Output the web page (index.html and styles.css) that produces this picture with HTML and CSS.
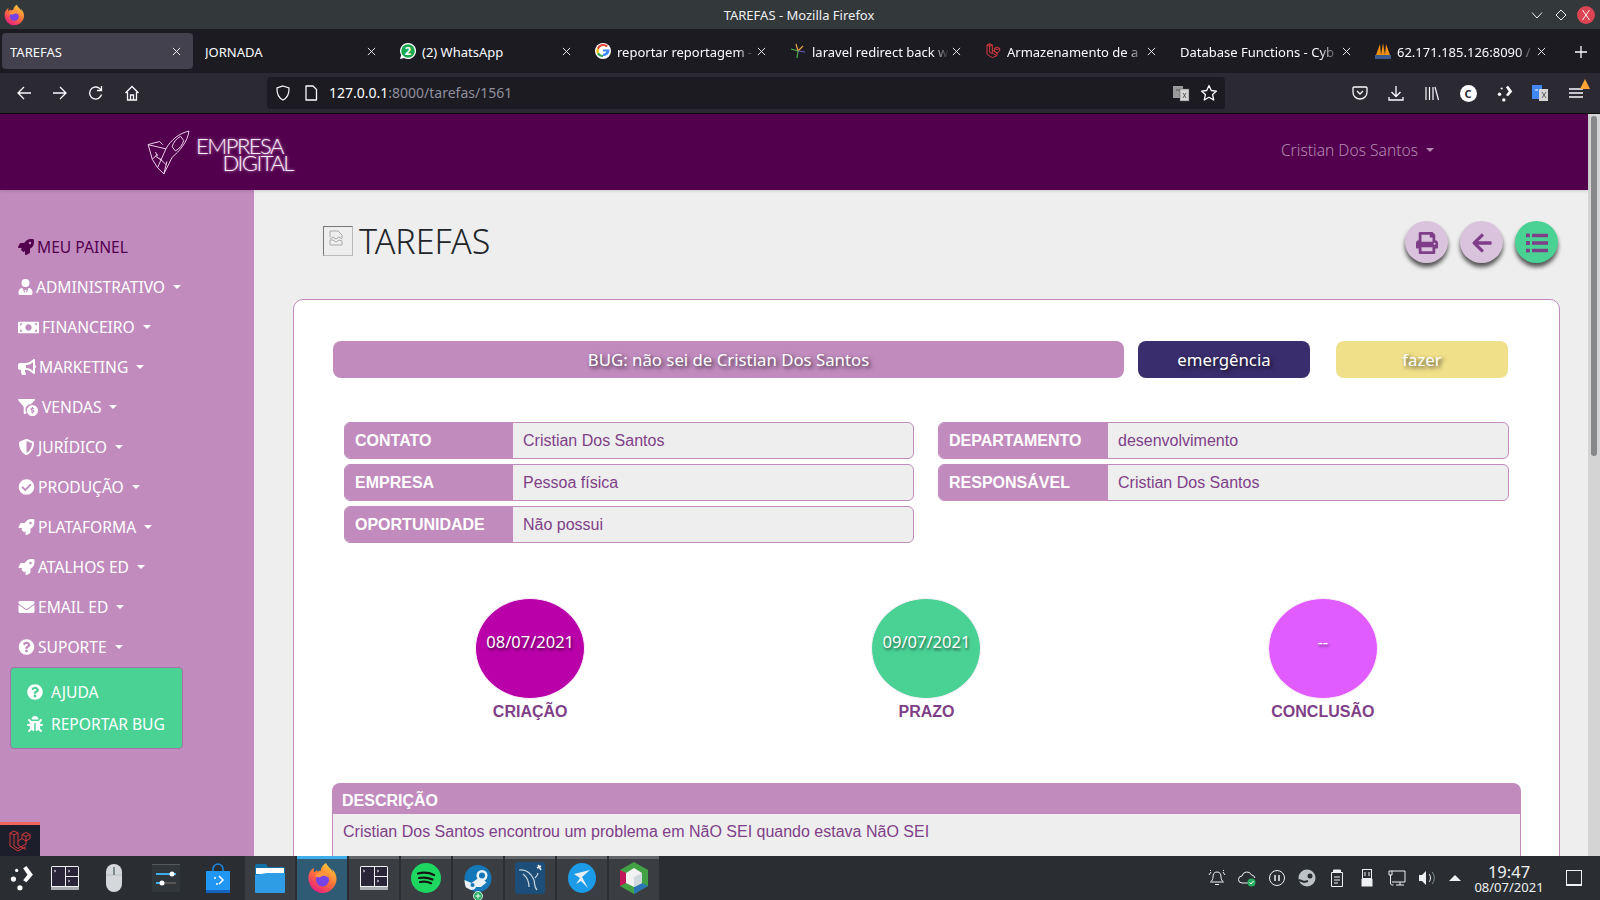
FILE: index.html
```html
<!DOCTYPE html>
<html lang="pt-BR">
<head>
<meta charset="utf-8">
<title>TAREFAS - Mozilla Firefox</title>
<link rel="stylesheet" href="styles.css">
</head>
<body>
<svg class="defs" width="0" height="0" aria-hidden="true">
  <defs>
    <symbol id="i-x" viewBox="0 0 10 10"><path d="M1 1l8 8M9 1l-8 8" stroke="#fbfbfe" stroke-width="1" fill="none"/></symbol>
    <symbol id="i-rocket" viewBox="0 0 512 512"><path d="M505.12 19.09c-1.19-5.53-6.66-11-12.21-12.19C460.72 0 435.51 0 410.41 0 307.18 0 245.27 55.2 199.05 128H94.84c-16.35.02-35.56 11.88-42.89 26.48L2.52 253.3A28.4 28.4 0 0 0 0 264a24 24 0 0 0 24 24h103.81l-22.47 22.47c-11.37 11.36-13 32.26 0 45.25l50.9 50.9c11.16 11.19 32.16 13.16 45.28 0l22.47-22.47V488a24 24 0 0 0 24 24 28.56 28.56 0 0 0 10.71-2.52l98.73-49.39c14.63-7.3 26.51-26.5 26.51-42.86V312.8c72.6-46.31 128.03-108.41 128.03-211.09C512.08 76.5 512.08 51.3 505.12 19.09zM384.04 168a40 40 0 1 1 40.01-40 40.02 40.02 0 0 1-40.01 40z"/></symbol>
    <symbol id="i-user" viewBox="0 0 448 512"><path d="M224 256a128 128 0 1 0 0-256 128 128 0 0 0 0 256zM320 288l-64 170-16-66 24-44h-80l24 44-16 66-64-170C56 292 0 346 0 416v48c0 26 22 48 48 48h352c26 0 48-22 48-48v-48c0-70-56-124-128-128z"/></symbol>
    <symbol id="i-money" viewBox="0 0 640 512"><path fill-rule="evenodd" d="M16 80h608c9 0 16 7 16 16v320c0 9-7 16-16 16H16c-9 0-16-7-16-16V96c0-9 7-16 16-16zM64 368c0 0 0 16 0 16h64c0-35-29-64-64-64zM576 144v-16h-64c0 35 29 64 64 64zM64 128v64c35 0 64-29 64-64zM512 384h64v-64c-35 0-64 29-64 64zM320 160c-53 0-96 43-96 96s43 96 96 96 96-43 96-96-43-96-96-96z"/></symbol>
    <symbol id="i-horn" viewBox="0 0 576 512"><path d="M576 240c0-23.63-12.95-44.04-32-55.12V32.01C544 23.26 537.02 0 512 0c-7.12 0-14.19 2.38-19.98 7.02l-85.03 68.03C364.28 109.19 310.66 128 256 128H64c-35.35 0-64 28.65-64 64v96c0 35.35 28.65 64 64 64h33.7c-1.39 10.48-2.18 21.14-2.18 32 0 39.77 9.26 77.35 25.56 110.94 5.19 10.69 16.52 17.06 28.4 17.06h74.28c26.05 0 41.69-29.84 25.9-50.56-16.4-21.52-26.15-48.36-26.15-77.44 0-11.11 1.62-21.79 4.41-32H256c54.66 0 108.28 18.81 150.98 52.95l85.03 68.03a32.023 32.023 0 0 0 19.98 7.02c24.92 0 32-22.78 32-32V295.13C563.05 284.04 576 263.63 576 240zm-96 141.42l-33.05-26.44C392.95 311.78 325.12 288 256 288v-96c69.12 0 136.95-23.78 190.95-66.98L480 98.58v282.84z"/></symbol>
    <symbol id="i-funnel" viewBox="0 0 640 512"><path fill-rule="evenodd" d="M20 0h480c18 0 27 22 14 35L400 150c-90 10-170 70-170 170 0 40 15 76 42 102l-70 30c-12 9-28 0-28-14V230L6 35C-7 22 2 0 20 0zM440 180a170 170 0 1 1 0 340 170 170 0 0 1 0-340zm-18 64v22c-26 5-40 22-40 44 0 26 22 38 44 44 20 5 28 8 28 16 0 6-6 12-20 12-10 0-22-4-30-10l-16 24c10 8 22 12 34 14v26h40v-24c24-5 40-22 40-46 0-26-22-38-44-44-20-5-28-8-28-14 0-6 6-10 18-10 8 0 18 2 26 8l16-24c-8-6-20-10-32-12v-26z"/></symbol>
    <symbol id="i-shield" viewBox="0 0 512 512"><path d="M466.5 83.7l-192-80a48.15 48.15 0 0 0-36.9 0l-192 80C27.7 91.1 16 108.6 16 128c0 198.5 114.5 335.7 221.5 380.3 11.8 4.9 25.1 4.9 36.9 0C360.1 472.6 496 349.3 496 128c0-19.4-11.7-36.9-29.5-44.3zM256.1 446.3l-.1-381 175.9 73.3c-3.3 151.4-82.1 261.1-175.8 307.7z"/></symbol>
    <symbol id="i-check" viewBox="0 0 512 512"><path d="M504 256c0 136.967-111.033 248-248 248S8 392.967 8 256 119.033 8 256 8s248 111.033 248 248zM227.314 387.314l184-184c6.248-6.248 6.248-16.379 0-22.627l-22.627-22.627c-6.248-6.249-16.379-6.249-22.628 0L216 308.118l-70.059-70.059c-6.248-6.248-16.379-6.248-22.628 0l-22.627 22.627c-6.248 6.248-6.248 16.379 0 22.627l104 104c6.249 6.249 16.379 6.249 22.628.001z"/></symbol>
    <symbol id="i-mail" viewBox="0 0 512 512"><path d="M502.3 190.8c3.9-3.1 9.7-.2 9.7 4.7V400c0 26.5-21.5 48-48 48H48c-26.5 0-48-21.5-48-48V195.6c0-5 5.7-7.8 9.7-4.7 22.4 17.4 52.1 39.5 154.1 113.6 21.1 15.4 56.7 47.8 92.2 47.6 35.7.3 72-32.8 92.3-47.6 102-74.1 131.6-96.3 154-113.7zM256 320c23.2.4 56.6-29.2 73.4-41.4 132.7-96.3 142.8-104.7 173.4-128.7 5.8-4.5 9.2-11.5 9.2-18.9v-19c0-26.5-21.5-48-48-48H48C21.5 64 0 85.5 0 112v19c0 7.4 3.4 14.3 9.2 18.9 30.6 23.9 40.7 32.4 173.4 128.7 16.8 12.2 50.2 41.8 73.4 41.4z"/></symbol>
    <symbol id="i-help" viewBox="0 0 512 512"><path d="M504 256c0 136.997-111.043 248-248 248S8 392.997 8 256C8 119.083 119.043 8 256 8s248 111.083 248 248zM262.655 90c-54.497 0-89.255 22.957-116.549 63.758-3.536 5.286-2.353 12.415 2.715 16.258l34.699 26.31c5.205 3.947 12.621 3.008 16.665-2.122 17.864-22.658 30.113-35.797 57.303-35.797 20.429 0 45.698 13.148 45.698 32.958 0 14.976-12.363 22.667-32.534 33.976C247.128 238.528 216 254.941 216 296v4c0 6.627 5.373 12 12 12h56c6.627 0 12-5.373 12-12v-1.333c0-28.462 83.186-29.647 83.186-106.667 0-58.002-60.165-102-116.531-102zM256 338c-25.365 0-46 20.635-46 46 0 25.364 20.635 46 46 46s46-20.636 46-46c0-25.365-20.635-46-46-46z"/></symbol>
    <symbol id="i-bug" viewBox="0 0 512 512"><path d="M511.988 288.9c-.478 17.43-15.217 31.1-32.653 31.1H424v16c0 21.864-4.882 42.584-13.6 61.145l60.228 60.228c12.496 12.497 12.496 32.758 0 45.255-12.498 12.497-32.759 12.496-45.256 0l-54.736-54.736C345.886 467.965 314.351 480 280 480V236c0-6.627-5.373-12-12-12h-24c-6.627 0-12 5.373-12 12v244c-34.351 0-65.886-12.035-90.636-32.108l-54.736 54.736c-12.498 12.497-32.759 12.496-45.256 0-12.496-12.497-12.496-32.758 0-45.255l60.228-60.228C92.882 378.584 88 357.864 88 336v-16H32.666C15.23 320 .491 306.33.013 288.9-.484 270.816 14.028 256 32 256h56v-58.745l-46.628-46.628c-12.496-12.497-12.496-32.758 0-45.255 12.498-12.497 32.758-12.497 45.256 0L141.255 160h229.489l54.627-54.627c12.498-12.497 32.758-12.497 45.256 0 12.496 12.497 12.496 32.758 0 45.255L424 197.255V256h56c17.972 0 32.484 14.816 31.988 32.9zM257 0c-61.856 0-112 50.144-112 112h224C369 50.144 318.856 0 257 0z"/></symbol>
    <symbol id="i-print" viewBox="0 0 512 512"><path d="M448 192V77.25c0-8.49-3.37-16.62-9.37-22.63L393.37 9.37c-6-6-14.14-9.37-22.63-9.37H96C78.33 0 64 14.33 64 32v160c-35.35 0-64 28.65-64 64v112c0 8.84 7.16 16 16 16h48v96c0 17.67 14.33 32 32 32h320c17.67 0 32-14.33 32-32v-96h48c8.84 0 16-7.16 16-16V256c0-35.35-28.65-64-64-64zm-64 256H128v-96h256v96zm0-224H128V64h192v48c0 8.84 7.16 16 16 16h48v96zm48 72c-13.25 0-24-10.75-24-24 0-13.26 10.75-24 24-24s24 10.74 24 24c0 13.25-10.75 24-24 24z"/></symbol>
    <symbol id="i-back" viewBox="0 0 448 512"><path d="M257.5 445.1l-22.2 22.2c-9.4 9.4-24.6 9.4-33.9 0L7 273c-9.4-9.4-9.4-24.6 0-33.9L201.4 44.7c9.4-9.4 24.6-9.4 33.9 0l22.2 22.2c9.5 9.5 9.3 25-.4 34.3L136.6 216H424c13.3 0 24 10.7 24 24v32c0 13.3-10.7 24-24 24H136.6l120.5 114.8c9.8 9.3 10 24.8.4 34.3z"/></symbol>
    <symbol id="i-list" viewBox="0 0 512 512"><path d="M0 35h90v90H0zM0 211h90v90H0zM0 387h90v90H0zM140 40h372v80H140zM140 216h372v80H140zM140 392h372v80H140z"/></symbol>
    <symbol id="i-laravel" viewBox="0 0 24 24"><path fill="none" stroke="currentColor" stroke-width="1" stroke-linejoin="round" d="M2 4l4-2 4 2v12l8 4.500M2 4v13l8 5 8-4.500M2 4l4 2 4-2M6 6v11l4 2.500 8-4.500M10 12l4-2.500M14 9.500V5.500l4-2 4 2v4l-4 2.500-4-2.500zM14 5.500l4 2 4-2M18 7.500v8"/></symbol>
    <symbol id="i-kde" viewBox="0 0 24 24"><circle cx="5" cy="13" r="2.400"/><circle cx="8" cy="5" r="1.500"/><circle cx="11" cy="21" r="2.400"/><path d="M14 3l3-2 6 8-6 7-3-2 4-5z"/></symbol>
    <symbol id="i-konsole" viewBox="0 0 28 24"><rect x="0" y="0" width="28" height="24" rx="1.500" fill="#eff0f1"/><rect x="1" y="1" width="13" height="19" fill="#2a2438"/><rect x="15" y="1" width="12" height="9" fill="#2a2438"/><rect x="15" y="11" width="12" height="9" fill="#2a2438"/><rect x="0" y="21" width="28" height="3" fill="#a9adb0"/><path d="M3 4l2 1-2 1M17 4l2 1-2 1M17 14l2 1-2 1" stroke="#eff0f1" stroke-width=".7" fill="none"/></symbol>
    <symbol id="i-firefox" viewBox="0 0 32 32"><defs><linearGradient id="ff1" x1="0.800" y1="0" x2="0.200" y2="1"><stop offset="0" stop-color="#ffd43a"/><stop offset=".5" stop-color="#ff7139"/><stop offset="1" stop-color="#e31587"/></linearGradient></defs><path fill="url(#ff1)" d="M29 11c-.7-1.700-2.100-3.500-3.300-4.100 1 1.900 1.500 3.400 1.700 4.500C25.700 7 22 5.200 20 1c-4 2.400-5.200 6-5 7.500-1 0-2.200.4-3 1.100-.5-.4-.8-.9-1-1.600-1.300.6-2.100 1.600-2.900 2.600-.5-1-.6-3 0-4.800C5.500 7.300 3 10 2.500 14 1.500 23 8 31 16.500 31 24 31 30 25 30.500 17.500c.100-2.300-.5-4.500-1.500-6.500z"/><circle cx="16.500" cy="18" r="6.500" fill="#7542e5"/><path fill="#ff9640" d="M9 14c2-3 5-4 8-3.500 3 .6 5 3 5.500 5.500-2-2-4-2.500-6-2-1 .3-1.500 1-2.500 1.200-2 .3-3-.5-5-1.200z"/></symbol>
    <symbol id="i-laraveltab" viewBox="0 0 24 24"><path fill="none" stroke="#d1383d" stroke-width="1.500" stroke-linejoin="round" d="M3 3l4-2 4 2v12l7 4v-4l-7-4M3 3v14l8 5 7-3M7 1v13l4 2M3 3l4 2 4-2M14 8l4-2 4 2v4l-4 3-4-3zM14 8l4 2 4-2"/></symbol>
  </defs>
</svg>

<div class="window">
  <header class="titlebar">
    <svg class="tb-logo" width="22" height="22"><use href="#i-firefox"/></svg>
    <span class="tb-title">TAREFAS - Mozilla Firefox</span>
    <div class="tb-controls">
      <svg width="12" height="12" viewBox="0 0 12 12"><path d="M1 3.500l5 5.500 5-5.500" fill="none" stroke="#eff0f1"/></svg>
      <svg width="12" height="12" viewBox="0 0 12 12"><path d="M6 1l5 5-5 5-5-5z" fill="none" stroke="#eff0f1"/></svg>
      <span class="tb-close"><svg width="12" height="12" viewBox="0 0 12 12"><path d="M2.500 1l7 10M9.500 1l-7 10" stroke="#fff" stroke-width=".9"/></svg></span>
    </div>
  </header>

  <nav class="tabs">
    <div class="tab tab-active"><span class="tab-text">TAREFAS</span><svg class="tab-x"><use href="#i-x"/></svg></div>
    <div class="tab"><span class="tab-text">JORNADA</span><svg class="tab-x"><use href="#i-x"/></svg></div>
    <div class="tab">
      <svg class="fav" viewBox="0 0 16 16"><path d="M8 0a8 8 0 0 0-6.800 12.100L0 16l4-1.100A8 8 0 1 0 8 0z" fill="#fff"/><circle cx="8" cy="8" r="6.800" fill="#1aa84f"/><text x="8" y="12" text-anchor="middle" font-size="11" font-weight="700" fill="#fff" font-family="Noto Sans, sans-serif">2</text></svg>
      <span class="tab-text">(2) WhatsApp</span><svg class="tab-x"><use href="#i-x"/></svg>
    </div>
    <div class="tab">
      <svg class="fav" viewBox="0 0 16 16"><circle cx="8" cy="8" r="8" fill="#fff"/><path d="M8 6.500h6.500c.3 3.800-2.200 6.500-6.500 6.500V10.800c1.700 0 3-1 3.400-2.200H8z" fill="#4285f4"/><path d="M8 3c1.300 0 2.400.5 3.300 1.300L13 2.700A7 7 0 0 0 2 5l2 1.500C4.700 4.500 6.100 3 8 3z" fill="#ea4335"/><path d="M2 5a7 7 0 0 0 0 6l2-1.500a4 4 0 0 1 0-3z" fill="#fbbc05"/><path d="M2 11a7 7 0 0 0 6 3v-2c-1.900 0-3.300-1-4-2.500z" fill="#34a853"/></svg>
      <span class="tab-text tab-fade">reportar reportagem -</span><svg class="tab-x"><use href="#i-x"/></svg>
    </div>
    <div class="tab">
      <svg class="fav" viewBox="0 0 16 16"><path d="M8 8L6 1M8 8l5-5" stroke="#e8a33d" stroke-width="1.200"/><path d="M8 8L1 6M8 8l-1 7" stroke="#4caf50" stroke-width="1.200"/><path d="M8 8l7 1" stroke="#6c5fc7" stroke-width="1.200"/></svg>
      <span class="tab-text tab-fade">laravel redirect back w</span><svg class="tab-x"><use href="#i-x"/></svg>
    </div>
    <div class="tab">
      <svg class="fav"><use href="#i-laraveltab"/></svg>
      <span class="tab-text tab-fade">Armazenamento de a</span><svg class="tab-x"><use href="#i-x"/></svg>
    </div>
    <div class="tab"><span class="tab-text tab-fade">Database Functions - Cyb</span><svg class="tab-x"><use href="#i-x"/></svg></div>
    <div class="tab">
      <svg class="fav" viewBox="0 0 16 16"><path d="M1 12L5 1l1 11zM6 12L8 0l2 12zM10 12l1-11 4 11z" fill="#f29111"/><rect x="0" y="12" width="16" height="4" fill="#3b5b8c"/></svg>
      <span class="tab-text tab-fade">62.171.185.126:8090 /</span><svg class="tab-x"><use href="#i-x"/></svg>
    </div>
    <svg class="tab-plus" width="14" height="14" viewBox="0 0 14 14"><path d="M7 1v12M1 7h12" stroke="#fbfbfe" stroke-width="1.300"/></svg>
  </nav>

  <div class="toolbar">
    <div class="tool-group tool-left">
      <span class="tool"><svg width="16" height="16" viewBox="0 0 16 16"><path d="M15 8H2M8 2L2 8l6 6" fill="none" stroke="#fbfbfe" stroke-width="1.300"/></svg></span>
      <span class="tool"><svg width="16" height="16" viewBox="0 0 16 16"><path d="M1 8h13M8 2l6 6-6 6" fill="none" stroke="#fbfbfe" stroke-width="1.300"/></svg></span>
      <span class="tool"><svg width="16" height="16" viewBox="0 0 16 16"><path d="M13.500 9.500A6 6 0 1 1 11 3l2.500 2M13.500 1v4.500H9" fill="none" stroke="#fbfbfe" stroke-width="1.300"/></svg></span>
      <span class="tool"><svg width="16" height="16" viewBox="0 0 16 16"><path d="M1.500 8L8 1.500 14.500 8M3.500 7v8h9V7M6.500 15v-5h3v5" fill="none" stroke="#fbfbfe" stroke-width="1.300"/></svg></span>
    </div>
    <div class="urlbar">
      <svg class="url-shield" width="16" height="16" viewBox="0 0 16 16"><path d="M8 1l6 2c.3 6-2 10-6 12C4 13 1.700 9 2 3z" fill="none" stroke="#fbfbfe" stroke-width="1.200"/></svg>
      <svg class="url-page" width="14" height="16" viewBox="0 0 14 16"><path d="M2 1h7l3.500 3.500V15H2z" fill="none" stroke="#fbfbfe" stroke-width="1.300" stroke-linejoin="round"/></svg>
      <span class="url-text">127.0.0.1<span class="url-dim">:8000/tarefas/1561</span></span>
      <svg class="url-trans" width="18" height="18" viewBox="0 0 18 18"><rect x="1" y="2" width="10" height="12" fill="#9a9a9a"/><rect x="8" y="5" width="9" height="12" fill="#d5d5d5" stroke="#555" stroke-width=".5"/><path d="M4 6h4M11 9l3 5M14 9l-3 5" stroke="#444" stroke-width=".8"/></svg>
      <svg class="url-star" width="18" height="18" viewBox="0 0 18 18"><path d="M9 1.500l2.300 5 5.200.6-3.900 3.500 1.100 5.400L9 13.300 4.300 16l1.100-5.400L1.500 7.100l5.200-.6z" fill="none" stroke="#fbfbfe" stroke-width="1.300" stroke-linejoin="round"/></svg>
    </div>
    <div class="tool-group tool-right">
      <span class="tool"><svg width="16" height="16" viewBox="0 0 16 16"><path d="M2 2h12c.8 0 1 .5 1 1v4c0 4-3 7-7 7s-7-3-7-7V3c0-.5.2-1 1-1z" fill="none" stroke="#fbfbfe" stroke-width="1.300"/><path d="M5 6l3 3 3-3" fill="none" stroke="#fbfbfe" stroke-width="1.300"/></svg></span>
      <span class="tool"><svg width="16" height="16" viewBox="0 0 16 16"><path d="M8 1v10M3.500 7L8 11.500 12.500 7M1 12v3h14v-3" fill="none" stroke="#fbfbfe" stroke-width="1.300"/></svg></span>
      <span class="tool"><svg width="16" height="16" viewBox="0 0 16 16"><path d="M2 2v13M5.500 2v13M9 2v13M11 2l3.500 13" fill="none" stroke="#fbfbfe" stroke-width="1.200"/></svg></span>
      <span class="tool"><span class="tool-c">C</span></span>
      <span class="tool"><svg class="tool-kde" width="17" height="17"><use href="#i-kde"/></svg></span>
      <span class="tool"><svg width="18" height="18" viewBox="0 0 18 18"><rect x="1" y="1" width="10" height="14" fill="#4285f4"/><rect x="8" y="5" width="9" height="12" fill="#d5d5d5"/><path d="M11 8l4 6M15 8l-4 6" stroke="#444" stroke-width=".8"/><path d="M4 6h3" stroke="#fff"/></svg></span>
      <span class="tool tool-menu"><svg width="16" height="16" viewBox="0 0 16 16"><path d="M1 4h14M1 8h14M1 12h14" stroke="#fbfbfe" stroke-width="1.300"/></svg><svg class="tool-warn" width="10" height="10" viewBox="0 0 10 10"><path d="M5 0l5 10H0z" fill="#ffa436"/></svg></span>
    </div>
  </div>

  <div class="page">
    <div class="page-col">
      <header class="site-head">
        <div class="brand">
          <svg class="brand-rocket" width="46" height="46" viewBox="0 0 44 44" fill="none" stroke="#f3dcf3" stroke-width=".9" stroke-linejoin="round">
            <path d="M42 2c-9 2-17 8-22 17L12 37l6 6 8-16C33 21 41 12 42 2z"/>
            <path d="M34 7c-4 2-7 6-8 10l3 4c4-2 7-6 8-10z"/>
            <path d="M20 19L3 15l3-1 8-2 3 3M3 15l4 14 5 8M12 24l-5 5M21 31l-3 12M14 28l6 6M10 22l2 4M16 30l-6-4"/>
          </svg>
          <div class="brand-name"><span class="brand-1">EMPRESA</span><span class="brand-2">DIGITAL</span></div>
        </div>
        <div class="user-menu">Cristian Dos Santos<span class="caret"></span></div>
      </header>

      <div class="body-row">
        <aside class="sidebar">
          <a class="side-item side-current"><svg class="si w16"><use href="#i-rocket"/></svg>MEU PAINEL</a>
          <a class="side-item"><svg class="si w15"><use href="#i-user"/></svg>ADMINISTRATIVO<span class="caret"></span></a>
          <a class="side-item"><svg class="si w20"><use href="#i-money"/></svg>FINANCEIRO<span class="caret"></span></a>
          <a class="side-item"><svg class="si w18"><use href="#i-horn"/></svg>MARKETING<span class="caret"></span></a>
          <a class="side-item"><svg class="si w20"><use href="#i-funnel"/></svg>VENDAS<span class="caret"></span></a>
          <a class="side-item"><svg class="si w16"><use href="#i-shield"/></svg>JURÍDICO<span class="caret"></span></a>
          <a class="side-item"><svg class="si w16"><use href="#i-check"/></svg>PRODUÇÃO<span class="caret"></span></a>
          <a class="side-item"><svg class="si w16"><use href="#i-rocket"/></svg>PLATAFORMA<span class="caret"></span></a>
          <a class="side-item"><svg class="si w16"><use href="#i-rocket"/></svg>ATALHOS ED<span class="caret"></span></a>
          <a class="side-item"><svg class="si w16"><use href="#i-mail"/></svg>EMAIL ED<span class="caret"></span></a>
          <a class="side-item"><svg class="si w16"><use href="#i-help"/></svg>SUPORTE<span class="caret"></span></a>
          <div class="side-drop">
            <a class="drop-item"><svg class="di"><use href="#i-help"/></svg>AJUDA</a>
            <a class="drop-item"><svg class="di"><use href="#i-bug"/></svg>REPORTAR BUG</a>
          </div>
        </aside>

        <main class="main">
          <div class="page-head">
            <span class="broken-img"><svg width="14" height="16" viewBox="0 0 14 16"><path d="M1 7V1h8l4 4v3M1 10v5h12v-4l-3-1-3 2-3-2z" fill="none" stroke="#aaa"/><path d="M1 9l3-2 3 2 3-2 3 2" fill="none" stroke="#aaa"/></svg></span>
            <h1 class="page-title">TAREFAS</h1>
            <div class="fabs">
              <button class="fab"><svg class="fab-i"><use href="#i-print"/></svg></button>
              <button class="fab"><svg class="fab-i"><use href="#i-back"/></svg></button>
              <button class="fab fab-green"><svg class="fab-i"><use href="#i-list"/></svg></button>
            </div>
          </div>

          <section class="card">
            <div class="chips">
              <div class="chip chip-title">BUG: não sei de Cristian Dos Santos</div>
              <div class="chip chip-navy">emergência</div>
              <div class="chip chip-yellow">fazer</div>
            </div>

            <div class="fields">
              <div class="field-col">
                <div class="field"><span class="f-label">CONTATO</span><span class="f-value">Cristian Dos Santos</span></div>
                <div class="field"><span class="f-label">EMPRESA</span><span class="f-value">Pessoa física</span></div>
                <div class="field"><span class="f-label">OPORTUNIDADE</span><span class="f-value">Não possui</span></div>
              </div>
              <div class="field-col field-col-right">
                <div class="field"><span class="f-label">DEPARTAMENTO</span><span class="f-value">desenvolvimento</span></div>
                <div class="field"><span class="f-label">RESPONSÁVEL</span><span class="f-value">Cristian Dos Santos</span></div>
              </div>
            </div>

            <div class="dates">
              <div class="date"><div class="disc disc-magenta">08/07/2021</div><div class="date-label">CRIAÇÃO</div></div>
              <div class="date"><div class="disc disc-green">09/07/2021</div><div class="date-label">PRAZO</div></div>
              <div class="date"><div class="disc disc-pink">--</div><div class="date-label">CONCLUSÃO</div></div>
            </div>

            <div class="desc">
              <div class="desc-head">DESCRIÇÃO</div>
              <div class="desc-body">Cristian Dos Santos encontrou um problema em NãO SEI quando estava NãO SEI</div>
            </div>
          </section>
        </main>

        <div class="debugbar"><svg width="24" height="24"><use href="#i-laravel"/></svg></div>
      </div>
    </div>
    <div class="scrollbar"><div class="scroll-thumb"></div></div>
  </div>

  <footer class="taskbar">
    <span class="task task-launcher"><svg width="26" height="26" class="white"><use href="#i-kde"/></svg></span>
    <span class="task task-term"><svg width="28" height="24"><use href="#i-konsole"/></svg></span>
    <span class="task"><svg width="16" height="28" viewBox="0 0 16 28"><rect x="0" y="0" width="16" height="28" rx="8" fill="#d5d8da"/><path d="M0 11h16" stroke="#aab0b3" stroke-width=".6"/><rect x="7" y="3" width="2" height="8" fill="#7f8c8d"/></svg></span>
    <span class="task"><svg width="28" height="28" viewBox="0 0 28 28"><rect width="28" height="28" fill="#31363b"/><rect y="0" width="28" height="1" fill="#55595c"/><rect x="4" y="9" width="20" height="2" fill="#3daee9"/><circle cx="20" cy="10" r="2.500" fill="#fff"/><rect x="4" y="18" width="20" height="2" fill="#555"/><rect x="4" y="18" width="8" height="2" fill="#3daee9"/><circle cx="10" cy="19" r="2.500" fill="#fff"/></svg></span>
    <span class="task"><svg width="26" height="30" viewBox="0 0 26 30"><path d="M8 9V6a5 5 0 0 1 10 0v3" fill="none" stroke="#1e88e5" stroke-width="1.500"/><path d="M1 8h24v22H1z" fill="#2196f3"/><path d="M1 27h24v3H1z" fill="#1565c0"/><circle cx="10" cy="15" r="1" fill="#fff"/><circle cx="12" cy="21" r="1" fill="#fff"/><path d="M14 13l4 4-4 4" fill="none" stroke="#fff" stroke-width="1.500"/></svg></span>
    <span class="task task-open"><svg width="30" height="30" viewBox="0 0 30 30"><path d="M0 3a2 2 0 0 1 2-2h9l2 3h15a2 2 0 0 1 2 2v22H0z" fill="#1272a8"/><rect x="1" y="5" width="28" height="6" fill="#fff"/><path d="M0 12l12-2h18v19a1 1 0 0 1-1 1H1a1 1 0 0 1-1-1z" fill="#2e9de6"/></svg></span>
    <span class="task task-run task-active"><svg width="32" height="32"><use href="#i-firefox"/></svg></span>
    <span class="task task-run"><svg width="28" height="24"><use href="#i-konsole"/></svg></span>
    <span class="task task-run"><svg width="30" height="30" viewBox="0 0 30 30"><circle cx="15" cy="15" r="15" fill="#1ed760"/><path d="M7 10.500c6-1.500 11-1 16 1.500M8 15c5-1 9-.6 13.500 1.500M9 19c4-.8 7.500-.5 11 1.200" fill="none" stroke="#191414" stroke-width="2.200" stroke-linecap="round"/></svg></span>
    <span class="task task-run task-steam"><svg width="28" height="36" viewBox="0 0 28 36"><ellipse cx="14" cy="13.500" rx="13.500" ry="13.500" fill="#1478b8"/><path d="M.5 15l7 3 9-6.500 6 6-5.500 4.500-5 0c-1 3-5 4-7 2l-3-1.500C1 20 .6 17.500.5 15z" fill="#eaf2f8"/><circle cx="18" cy="10.500" r="5.500" fill="#eaf2f8"/><circle cx="18" cy="10.500" r="3" fill="#1478b8"/><circle cx="8.500" cy="20" r="2" fill="#1478b8"/><circle cx="14" cy="31" r="4.500" fill="#27ae60" stroke="#fff" stroke-width=".8"/><path d="M14 28.500v5M11.500 31h5" stroke="#fff"/></svg></span>
    <span class="task task-run"><svg width="30" height="32" viewBox="0 0 30 32"><rect width="30" height="32" rx="3" fill="#1d4e79"/><path d="M4 8c7-1 12 3 15 10 1 4 0 7 3 10M8 12c4 3 6 8 6 13M20 16c2-2 3-3 3-5" fill="none" stroke="#c9d6df" stroke-width="1.200"/><path d="M23 3l3 5M22 6l4-2" stroke="#e6eef3" stroke-width="1.600"/></svg></span>
    <span class="task task-run"><svg width="28" height="30" viewBox="0 0 28 30"><ellipse cx="14" cy="15" rx="14" ry="15" fill="#1c9ce8"/><path d="M6 11l16-4-8 7 6 11-7-7-5 3 4-6z" fill="#e6eef3"/></svg></span>
    <span class="task task-run"><svg width="28" height="32" viewBox="0 0 28 32"><path d="M14 0l14 8v16l-14 8L0 24V8z" fill="#41a144"/><path d="M0 8v16l6-3V11z" fill="#c2185b"/><path d="M14 32l14-8-6-3-8 4z" fill="#2a74b8"/><path d="M6 11l8-5 8 5v10l-8 4-8-4z" fill="#f2f2f2"/><path d="M14 15l8-4v10l-8 4z" fill="#cfd8dc"/></svg></span>

    <div class="tray">
      <span class="tray-i"><svg width="18" height="18" viewBox="0 0 18 18" fill="none" stroke="#eff0f1"><path d="M9 3c-3 0-4 2-4 5 0 2-1 4-2.500 5h13C14 12 13 10 13 8c0-3-1-5-4-5zM7 15.500h4M1 6l2-3M17 6l-2-3M3 1L2 2M15 1l1 1"/></svg></span>
      <span class="tray-i"><svg width="20" height="18" viewBox="0 0 20 18"><path d="M5 14a3.500 3.500 0 0 1 0-7 5 5 0 0 1 9.500-1A4 4 0 0 1 18 9" fill="none" stroke="#eff0f1"/><path d="M5 14h7" stroke="#eff0f1"/><circle cx="14.500" cy="13.500" r="4" fill="#27ae60"/><path d="M12.500 13.500l1.500 1.500 2.500-3" fill="none" stroke="#fff"/></svg></span>
      <span class="tray-i"><svg width="18" height="18" viewBox="0 0 18 18" fill="none" stroke="#eff0f1"><circle cx="9" cy="9" r="7.500"/><path d="M7 6v6M11 6v6" stroke-width="1.500"/></svg></span>
      <span class="tray-i"><svg width="18" height="18" viewBox="0 0 18 18"><circle cx="9" cy="9" r="8.500" fill="#bdc3c7"/><circle cx="12" cy="7" r="2.500" fill="#2a2e32"/><path d="M1 11l5 2 4-1" stroke="#2a2e32" stroke-width="2" fill="none"/></svg></span>
      <span class="tray-i"><svg width="16" height="18" viewBox="0 0 16 18" fill="none" stroke="#eff0f1"><path d="M2.500 3.500h11v14h-11z"/><path d="M4.500 3.500V1h7v2.500" fill="#eff0f1"/><path d="M5 8h6M5 11h6M5 14h4"/></svg></span>
      <span class="tray-i"><svg width="12" height="18" viewBox="0 0 12 18"><rect x="1.500" y=".5" width="9" height="9" fill="none" stroke="#eff0f1"/><rect x=".5" y="10" width="11" height="7.500" fill="#eff0f1"/><path d="M4 3v4M8 3v4" stroke="#eff0f1"/></svg></span>
      <span class="tray-i"><svg width="18" height="18" viewBox="0 0 18 18" fill="none" stroke="#eff0f1"><path d="M4 2h13v11H4M8 16h8M12 13v3M1 2h3v4H1zM2.500 6v8c0 2 1 2 3 2"/></svg></span>
      <span class="tray-i"><svg width="18" height="18" viewBox="0 0 18 18"><path d="M1 6h3l4-4v14l-4-4H1z" fill="#eff0f1"/><path d="M11 5c2 2 2 6 0 8" fill="none" stroke="#eff0f1"/><path d="M14 3c3 3 3 9 0 12" fill="none" stroke="#7f8c8d"/></svg></span>
      <span class="tray-arrow"></span>
      <div class="clock"><span class="clock-time">19:47</span><span class="clock-date">08/07/2021</span></div>
      <span class="tray-desk"><span class="desk-box"></span></span>
    </div>
  </footer>
</div>
</body>
</html>
```

FILE: styles.css
```css
* { box-sizing: border-box; }
html, body { margin: 0; padding: 0; height: 100%; overflow: hidden; }
body { font-family: "Noto Sans", sans-serif; background: #2a2e32; }
.defs { position: absolute; }
.window { width: 1600px; height: 900px; display: flex; flex-direction: column; }

.titlebar { height: 29px; background: #33383b; display: grid; grid-template-columns: 1fr auto 1fr; align-items: center; padding: 0 5px 0 3px; color: #eff0f1; font-size: 13px; flex: none; }
.tb-logo { justify-self: start; }
.tb-controls { display: flex; align-items: center; gap: 12px; justify-self: end; }
.tb-close { width: 18px; height: 18px; background: #da4453; border-radius: 50%; display: flex; align-items: center; justify-content: center; margin-left: -2px; }

.tabs { height: 44px; background: #1c1b22; display: flex; align-items: flex-start; gap: 4px; padding: 4px 0 0 2px; flex: none; color: #fbfbfe; font-size: 13px; }
.tab { width: 191px; height: 36px; border-radius: 4px; display: flex; align-items: center; padding: 0 8px; flex: none; }
.tab-active { background: #42414d; }
.fav { width: 16px; height: 16px; margin-right: 6px; flex: none; }
.tab-text { flex: 1; white-space: nowrap; overflow: hidden; padding-top: 2px; }
.tab-fade { -webkit-mask-image: linear-gradient(to right, #000 88%, transparent 100%); mask-image: linear-gradient(to right, #000 88%, transparent 100%); }
.tab-x { width: 9px; height: 9px; margin: 0 4px 0 3px; flex: none; }
.tab-plus { margin: 12px 0 0 12px; flex: none; }

.toolbar { height: 41px; background: #2b2a33; border-bottom: 1px solid #0c0c0d; display: flex; align-items: flex-start; padding: 4px 0 0 6px; flex: none; }
.tool-group { display: flex; height: 32px; }
.tool { width: 36px; height: 32px; display: flex; align-items: center; justify-content: center; position: relative; }
.tool-left { width: 144px; }
.urlbar { width: 958px; height: 32px; margin-left: 117px; background: #1c1b22; border-radius: 4px; display: flex; align-items: center; padding: 0 7px 0 8px; color: #fbfbfe; font-size: 14px; }
.url-shield { flex: none; }
.url-page { margin-left: 13px; flex: none; }
.url-text { margin-left: 11px; flex: 1; padding-bottom: 1px; }
.url-dim { color: #8f8f9d; }
.url-star { margin-left: 10px; flex: none; }
.url-trans { flex: none; }
.tool-right { margin-left: 117px; }
.tool-c { width: 17px; height: 17px; border-radius: 50%; background: #fbfbfe; color: #2b2a33; font-size: 11px; font-weight: 700; display: flex; align-items: center; justify-content: center; }
.tool-kde { fill: #fbfbfe; }
.tool-warn { position: absolute; top: 2px; right: 4px; }

.page { flex: 1; display: flex; min-height: 0; }
.page-col { flex: 1; display: flex; flex-direction: column; min-width: 0; }
.scrollbar { width: 12px; background: #d4d4d4; padding: 2px 3px 0; flex: none; }
.scroll-thumb { height: 340px; background: #868889; border-radius: 3px; }

.site-head { height: 76px; background: #52004d; display: flex; align-items: center; padding: 0 154px 0 145px; flex: none; box-shadow: 0 1px 3px rgba(0,0,0,.15); position: relative; z-index: 1; }
.brand { display: flex; align-items: center; gap: 5px; }
.brand-name { display: flex; flex-direction: column; align-items: flex-end; width: 100px; color: #fbeefb; font-family: "Lato", sans-serif; font-weight: 300; text-shadow: 0 0 3px #e6b8e6; line-height: 17px; font-size: 22px; padding-top: 3px; }
.brand-1 { align-self: flex-start; letter-spacing: -1.500px; }
.brand-2 { letter-spacing: -1.500px; margin-right: 3px; }
.user-menu { margin-left: auto; font-size: 15.600px; color: #b48ab2; display: flex; align-items: center; font-weight: 300; padding-bottom: 4px; }
.caret { display: inline-block; width: 0; height: 0; border-top: 4px solid currentColor; border-left: 4px solid transparent; border-right: 4px solid transparent; margin-left: 8px; }

.body-row { flex: 1; display: flex; min-height: 0; position: relative; }
.sidebar { width: 254px; background: #c18bbe; padding: 37px 0 0 0; flex: none; color: #fff; font-size: 15.600px; }
.side-item { height: 40px; display: flex; align-items: center; padding-left: 18px; }
.side-current { color: #52004d; }
.si { fill: currentColor; margin-right: 3px; flex: none; height: 16px; }
.w15 { width: 15px; }
.w16 { width: 17px; }
.w18 { width: 18px; }
.w20 { width: 21px; height: 17px; }
.side-current .w16 { width: 16px; }
.side-drop { margin-left: 10px; width: 173px; height: 82px; background: #4ad295; border: 1px solid #a86fa8; border-radius: 4px; padding-top: 8px; }
.drop-item { height: 32px; display: flex; align-items: center; padding-left: 16px; color: #fff; }
.di { width: 16px; height: 16px; fill: #fff; margin-right: 8px; flex: none; }

.main { flex: 1; background: #eee; min-width: 0; overflow: hidden; }
.page-head { height: 109px; display: flex; align-items: flex-start; padding: 31px 30px 0 69px; }
.broken-img { width: 30px; height: 30px; margin-top: 5px; border: 1px solid; border-color: #777 #bbb #bbb #777; display: flex; align-items: center; justify-content: center; padding: 0 4px 6px 0; flex: none; }
.page-title { margin: 0 0 0 6px; font-size: 34px; font-weight: 300; color: #212529; line-height: 40px; }
.fabs { margin-left: auto; display: flex; gap: 12px; }
.fab { width: 43px; height: 42px; border: 0; border-radius: 50%; background: #dac3dc; box-shadow: 0 4px 4px rgba(0,0,0,.65); display: flex; align-items: center; justify-content: center; padding: 1px 0 0; color: #7f3f88; }
.fab-green { background: #4ad295; }
.fab-i { width: 22px; height: 22px; fill: currentColor; }

.card { margin: 0 28px 0 39px; height: 700px; background: #fff; border: 1px solid #c18bbe; border-radius: 10px 10px 0 0; padding: 41px 38px 0 39px; }
.chips { display: flex; }
.chip { height: 37px; border-radius: 8px; color: #fff; font-size: 16.800px; display: flex; align-items: center; justify-content: center; text-shadow: 2px 2px 4px rgba(0,0,0,.75); }
.chip-title { width: 791px; background: #c18bbe; }
.chip-navy { width: 172px; margin-left: 14px; background: #3a2d6d; }
.chip-yellow { width: 172px; margin-left: 26px; background: #f1e08a; }

.fields { display: grid; grid-template-columns: 570px 571px; column-gap: 24px; margin: 44px 0 0 11px; }
.field-col { display: flex; flex-direction: column; gap: 5px; }
.field { height: 37px; border: 1px solid #c18bbe; border-radius: 6px; background: #eee; display: flex; overflow: hidden; font-family: "Liberation Sans", Arial, sans-serif; font-size: 16px; }
.f-label { width: 168px; background: #c18bbe; color: #fff; font-weight: 700; padding-left: 10px; display: flex; align-items: center; flex: none; }
.field-col-right .f-label { width: 169px; }
.f-value { color: #7f3f88; padding-left: 10px; display: flex; align-items: center; }

.dates { display: grid; grid-template-columns: repeat(3, 1fr); margin: 55px 0 0 -1px; width: 1189px; }
.date { display: flex; flex-direction: column; align-items: center; }
.disc { width: 110px; height: 101px; border-radius: 50%; border: 1px solid #fbeffb; color: #fff; font-size: 16.500px; display: flex; align-items: center; justify-content: center; padding-bottom: 14px; text-shadow: 1px 2px 3px rgba(0,0,0,.6); }
.disc-magenta { background: #b900a9; }
.disc-green { background: #4ad295; }
.disc-pink { background: #e15cff; }
.date-label { margin-top: 2px; font-family: "Liberation Sans", Arial, sans-serif; font-weight: 700; font-size: 16px; color: #7f3f88; line-height: 22px; }

.desc { margin: 60px 0 0 -1px; width: 1189px; font-family: "Liberation Sans", Arial, sans-serif; font-size: 16px; }
.desc-head { height: 31px; background: #c18bbe; color: #fff; font-weight: 700; border-radius: 8px 8px 0 0; padding: 9px 10px 0; line-height: 18px; }
.desc-body { background: #eee; color: #7f3f88; border: 1px solid #c18bbe; border-top: 0; height: 100px; padding: 8px 10px; line-height: 20px; }

.debugbar { position: absolute; left: 0; bottom: 0; width: 40px; height: 34px; background: #1c1f2b; border-top: 3px solid #f4645f; color: #d1383d; display: flex; align-items: center; justify-content: center; }

.taskbar { height: 44px; background: #2a2e32; display: flex; gap: 2px; flex: none; position: relative; z-index: 2; }
.task { width: 50px; height: 44px; display: flex; align-items: center; justify-content: center; flex: none; }
.task-launcher { width: 41px; }
.task-launcher .white { fill: #fff; }
.task-term { width: 44px; }
.task-open { background: #3a3e43; }
.task-run { background: #3a3e43; border-top: 3px solid #62666a; padding-bottom: 3px; }
.task-active { background: #2f5b75; border-top-color: #3daee9; }
.task-steam { padding: 6px 0 0; align-items: flex-start; }
.tray { margin-left: auto; display: flex; align-items: center; height: 44px; color: #eff0f1; }
.tray-i { width: 30px; display: flex; justify-content: center; }
.tray-arrow { width: 26px; display: flex; justify-content: center; }
.tray-arrow::before { content: ""; border-left: 6px solid transparent; border-right: 6px solid transparent; border-bottom: 6px solid #eff0f1; }
.clock { width: 80px; display: flex; flex-direction: column; align-items: center; padding-left: 2px; }
.clock-time { font-size: 16.500px; line-height: 18px; }
.clock-date { font-size: 13px; line-height: 13px; }
.tray-desk { width: 52px; display: flex; justify-content: center; }
.desk-box { width: 16px; height: 16px; border: 1px solid #eff0f1; border-bottom-width: 2px; }
```
